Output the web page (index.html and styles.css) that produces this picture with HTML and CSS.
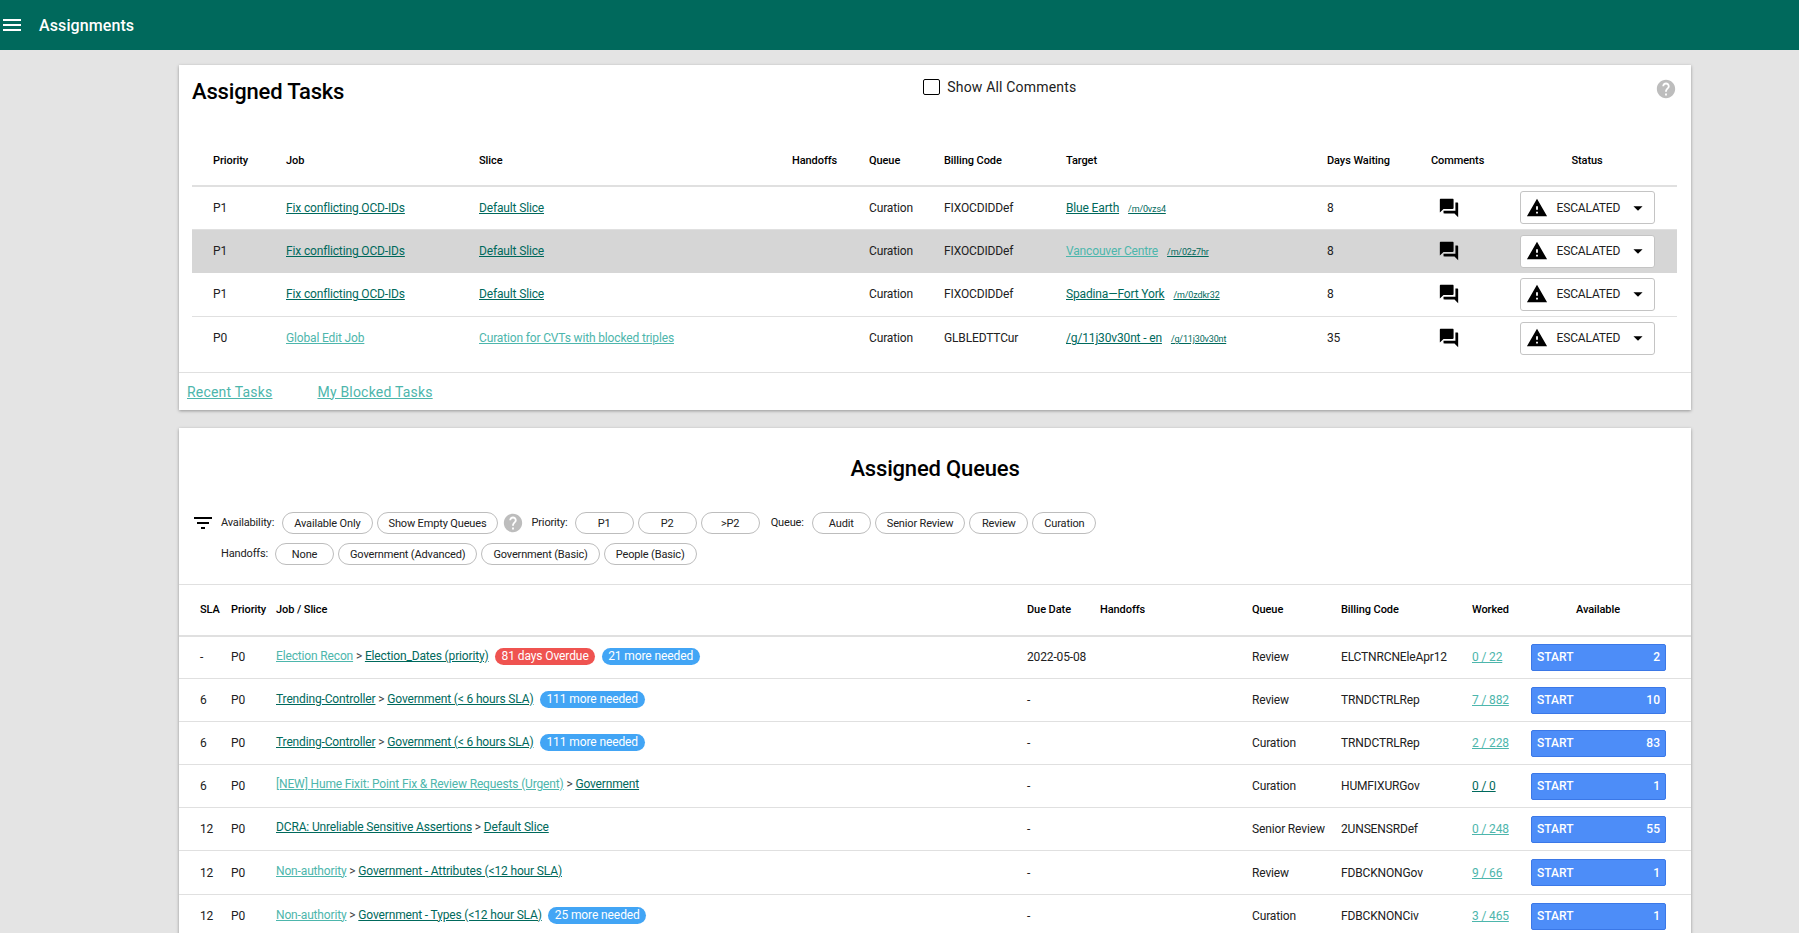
FILE: index.html
```html
<!DOCTYPE html>
<html lang="en">
<head>
<meta charset="utf-8">
<title>Assignments</title>
<link rel="stylesheet" href="styles.css">
</head>
<body>
<svg class="defs" width="0" height="0" aria-hidden="true">
  <symbol id="i-forum" viewBox="0 0 24 24"><path d="M21 6h-2v9H6v2c0 .55.45 1 1 1h11l4 4V7c0-.55-.45-1-1-1zm-4 6V3c0-.55-.45-1-1-1H3c-.55 0-1 .45-1 1v14l4-4h10c.55 0 1-.45 1-1z"/></symbol>
  <symbol id="i-warn" viewBox="0 0 24 24"><path d="M1 21h22L12 2 1 21zm12-3h-2v-2h2v2zm0-4h-2v-4h2v4z"/></symbol>
  <symbol id="i-drop" viewBox="0 0 24 24"><path d="M7 10l5 5 5-5z"/></symbol>
  <symbol id="i-help" viewBox="0 0 24 24"><path d="M12 2C6.48 2 2 6.48 2 12s4.48 10 10 10 10-4.48 10-10S17.52 2 12 2zm1 17h-2v-2h2v2zm2.07-7.75l-.9.92C13.45 12.9 13 13.5 13 15h-2v-.5c0-1.1.45-2.1 1.17-2.83l1.24-1.26c.37-.36.59-.86.59-1.41 0-1.1-.9-2-2-2s-2 .9-2 2H8c0-2.21 1.79-4 4-4s4 1.79 4 4c0 .88-.36 1.68-.93 2.25z"/></symbol>
</svg>

<header class="topbar">
  <svg class="menu-icon" viewBox="0 0 24 24"><path d="M3 18h18v-2H3v2zm0-5h18v-2H3v2zm0-7v2h18V6H3z"/></svg>
  <span class="app-title">Assignments</span>
</header>

<main class="page">
  <section class="card card-tasks">
    <div class="tasks-head">
      <h1 class="title">Assigned Tasks</h1>
      <label class="show-all"><span class="checkbox"></span>Show All Comments</label>
      <svg class="help help-top"><use href="#i-help"/></svg>
    </div>
    <table class="tasks">
      <colgroup>
        <col class="t1"><col class="t2"><col class="t3"><col class="t4"><col class="t5"><col class="t6"><col class="t7"><col class="t8"><col class="t9"><col class="t10">
      </colgroup>
      <thead>
        <tr><th class="first">Priority</th><th>Job</th><th>Slice</th><th>Handoffs</th><th>Queue</th><th>Billing Code</th><th>Target</th><th>Days Waiting</th><th>Comments</th><th class="center">Status</th></tr>
      </thead>
      <tbody>
        <tr>
          <td class="first">P1</td><td><a href="#">Fix conflicting OCD-IDs</a></td><td><a href="#">Default Slice</a></td><td></td><td>Curation</td><td>FIXOCDIDDef</td>
          <td><a href="#">Blue Earth</a><a class="mid" href="#">/m/0vzs4</a></td><td>8</td>
          <td><svg class="forum"><use href="#i-forum"/></svg></td>
          <td class="center"><button class="status"><svg class="warn"><use href="#i-warn"/></svg><span>ESCALATED</span><svg class="drop"><use href="#i-drop"/></svg></button></td>
        </tr>
        <tr class="hl">
          <td class="first">P1</td><td><a href="#">Fix conflicting OCD-IDs</a></td><td><a href="#">Default Slice</a></td><td></td><td>Curation</td><td>FIXOCDIDDef</td>
          <td><a class="seen" href="#">Vancouver Centre</a><a class="mid" href="#">/m/02z7hr</a></td><td>8</td>
          <td><svg class="forum"><use href="#i-forum"/></svg></td>
          <td class="center"><button class="status"><svg class="warn"><use href="#i-warn"/></svg><span>ESCALATED</span><svg class="drop"><use href="#i-drop"/></svg></button></td>
        </tr>
        <tr>
          <td class="first">P1</td><td><a href="#">Fix conflicting OCD-IDs</a></td><td><a href="#">Default Slice</a></td><td></td><td>Curation</td><td>FIXOCDIDDef</td>
          <td><a href="#">Spadina—Fort York</a><a class="mid" href="#">/m/0zdkr32</a></td><td>8</td>
          <td><svg class="forum"><use href="#i-forum"/></svg></td>
          <td class="center"><button class="status"><svg class="warn"><use href="#i-warn"/></svg><span>ESCALATED</span><svg class="drop"><use href="#i-drop"/></svg></button></td>
        </tr>
        <tr class="last">
          <td class="first">P0</td><td><a class="seen" href="#">Global Edit Job</a></td><td><a class="seen" href="#">Curation for CVTs with blocked triples</a></td><td></td><td>Curation</td><td>GLBLEDTTCur</td>
          <td><a href="#">/g/11j30v30nt - en</a><a class="mid" href="#">/g/11j30v30nt</a></td><td>35</td>
          <td><svg class="forum"><use href="#i-forum"/></svg></td>
          <td class="center"><button class="status"><svg class="warn"><use href="#i-warn"/></svg><span>ESCALATED</span><svg class="drop"><use href="#i-drop"/></svg></button></td>
        </tr>
      </tbody>
    </table>
    <div class="task-links">
      <a class="seen" href="#">Recent Tasks</a>
      <a class="seen" href="#">My Blocked Tasks</a>
    </div>
  </section>

  <section class="card card-queues">
    <h2 class="title queues-title">Assigned Queues</h2>
    <div class="filters">
      <div class="filter-row">
        <svg class="filter-icon" viewBox="0 0 24 24"><path d="M10 18h4v-2h-4v2zM3 6v2h18V6H3zm3 7h12v-2H6v2z"/></svg>
        <span class="f-label f-avail">Availability:</span>
        <button class="pill">Available Only</button>
        <button class="pill">Show Empty Queues</button>
        <svg class="help help-filter"><use href="#i-help"/></svg>
        <span class="f-label f-priority">Priority:</span>
        <button class="pill wide">P1</button>
        <button class="pill wide">P2</button>
        <button class="pill wide">&gt;P2</button>
        <span class="f-label f-queue">Queue:</span>
        <button class="pill wide">Audit</button>
        <button class="pill">Senior Review</button>
        <button class="pill wide">Review</button>
        <button class="pill">Curation</button>
      </div>
      <div class="filter-row second">
        <span class="f-label">Handoffs:</span>
        <button class="pill wide">None</button>
        <button class="pill">Government (Advanced)</button>
        <button class="pill">Government (Basic)</button>
        <button class="pill">People (Basic)</button>
      </div>
    </div>
    <table class="queues">
      <colgroup>
        <col class="q1"><col class="q2"><col class="q3"><col class="q4"><col class="q5"><col class="q6"><col class="q7"><col class="q8"><col class="q9">
      </colgroup>
      <thead>
        <tr><th class="first">SLA</th><th>Priority</th><th>Job / Slice</th><th>Due Date</th><th>Handoffs</th><th>Queue</th><th>Billing Code</th><th>Worked</th><th class="avail">Available</th></tr>
      </thead>
      <tbody>
        <tr>
          <td class="first">-</td><td>P0</td>
          <td class="job"><a class="seen" href="#">Election Recon</a> <span class="gt">&gt;</span> <a href="#">Election_Dates (priority)</a><span class="badge red">81 days Overdue</span><span class="badge blue">21 more needed</span></td>
          <td>2022-05-08</td><td></td><td>Review</td><td>ELCTNRCNEleApr12</td><td><a class="seen" href="#">0 / 22</a></td>
          <td><button class="start"><span>START</span><span>2</span></button></td>
        </tr>
        <tr>
          <td class="first">6</td><td>P0</td>
          <td class="job"><a href="#">Trending-Controller</a> <span class="gt">&gt;</span> <a href="#">Government (&lt; 6 hours SLA)</a><span class="badge blue">111 more needed</span></td>
          <td>-</td><td></td><td>Review</td><td>TRNDCTRLRep</td><td><a class="seen" href="#">7 / 882</a></td>
          <td><button class="start"><span>START</span><span>10</span></button></td>
        </tr>
        <tr>
          <td class="first">6</td><td>P0</td>
          <td class="job"><a href="#">Trending-Controller</a> <span class="gt">&gt;</span> <a href="#">Government (&lt; 6 hours SLA)</a><span class="badge blue">111 more needed</span></td>
          <td>-</td><td></td><td>Curation</td><td>TRNDCTRLRep</td><td><a class="seen" href="#">2 / 228</a></td>
          <td><button class="start"><span>START</span><span>83</span></button></td>
        </tr>
        <tr>
          <td class="first">6</td><td>P0</td>
          <td class="job up"><a class="seen" href="#">[NEW] Hume Fixit: Point Fix &amp; Review Requests (Urgent)</a> <span class="gt">&gt;</span> <a href="#">Government</a></td>
          <td>-</td><td></td><td>Curation</td><td>HUMFIXURGov</td><td><a href="#">0 / 0</a></td>
          <td><button class="start"><span>START</span><span>1</span></button></td>
        </tr>
        <tr>
          <td class="first">12</td><td>P0</td>
          <td class="job up"><a href="#">DCRA: Unreliable Sensitive Assertions</a> <span class="gt">&gt;</span> <a href="#">Default Slice</a></td>
          <td>-</td><td></td><td>Senior Review</td><td>2UNSENSRDef</td><td><a class="seen" href="#">0 / 248</a></td>
          <td><button class="start"><span>START</span><span>55</span></button></td>
        </tr>
        <tr class="tall">
          <td class="first">12</td><td>P0</td>
          <td class="job up"><a class="seen" href="#">Non-authority</a> <span class="gt">&gt;</span> <a href="#">Government - Attributes (&lt;12 hour SLA)</a></td>
          <td>-</td><td></td><td>Review</td><td>FDBCKNONGov</td><td><a class="seen" href="#">9 / 66</a></td>
          <td><button class="start"><span>START</span><span>1</span></button></td>
        </tr>
        <tr>
          <td class="first">12</td><td>P0</td>
          <td class="job"><a class="seen" href="#">Non-authority</a> <span class="gt">&gt;</span> <a href="#">Government - Types (&lt;12 hour SLA)</a><span class="badge blue">25 more needed</span></td>
          <td>-</td><td></td><td>Curation</td><td>FDBCKNONCiv</td><td><a class="seen" href="#">3 / 465</a></td>
          <td><button class="start"><span>START</span><span>1</span></button></td>
        </tr>
      </tbody>
    </table>
  </section>
</main>
</body>
</html>
```

FILE: styles.css
```css
* { box-sizing: border-box; }

html, body {
  height: 100%;
  overflow: hidden;
}

body {
  margin: 0;
  background: #e4e4e4;
  color: #000;
  font-family: Roboto, "Liberation Sans", sans-serif;
  font-size: 12px;
}

.defs { position: absolute; }

a { color: #00695c; text-decoration: underline; }
a.seen { color: #4db6ac; }

/* top bar */
.topbar {
  height: 50px;
  background: #00695c;
  display: flex;
  align-items: center;
  color: #fff;
}
.menu-icon { width: 24px; height: 24px; fill: #fff; flex: none; }
.app-title { margin-left: 15px; font-size: 16px; font-weight: 500; letter-spacing: .1px; }

/* page */
.page {
  padding: 15px 108px 0 179px;
  display: flex;
  flex-direction: column;
  gap: 18px;
}
.card {
  background: #fff;
  box-shadow: 0 1px 3px rgba(0, 0, 0, .35);
}
.title { margin: 0; font-size: 22px; font-weight: 500; line-height: 26px; letter-spacing: -.17px; }

/* assigned tasks */
.card-tasks { padding-top: 14px; }
.tasks-head {
  height: 56px;
  padding: 0 14px 0 13px;
  display: flex;
  align-items: flex-start;
}
.show-all {
  margin: -1px 0 0 579px;
  height: 18px;
  display: flex;
  align-items: center;
  gap: 7px;
  font-size: 14px;
  letter-spacing: .18px;
  color: #212121;
}
.checkbox {
  width: 17px;
  height: 16px;
  border: 1.5px solid #000;
  border-radius: 2px;
  flex: none;
}
.help { fill: #bdbdbd; }
.help-top { width: 22px; height: 22px; margin: -1px 0 0 auto; }

table { border-collapse: collapse; table-layout: fixed; }
th { text-align: left; font-size: 11px; font-weight: 500; padding: 0; letter-spacing: -.08px; }
td { padding: 0; color: #212121; vertical-align: middle; letter-spacing: -.15px; }
th.center, td.center { text-align: center; }

.tasks { width: 1485px; margin-left: 13px; }
.t1 { width: 94px; }
.t2 { width: 193px; }
.t3 { width: 313px; }
.t4 { width: 77px; }
.t5 { width: 75px; }
.t6 { width: 122px; }
.t7 { width: 261px; }
.t8 { width: 104px; }
.t9 { width: 66px; }
.t10 { width: 180px; }

.tasks th.first, .tasks td.first { padding-left: 21px; }
.tasks thead tr { height: 51px; border-bottom: 2px solid #e0e0e0; }
.tasks th { padding-top: 1px; }
.tasks tbody tr { height: 43px; border-bottom: 1px solid #e0e0e0; }
.tasks tbody tr.hl { background: #d6d6d6; height: 44px; border-bottom: 0; }
.tasks tbody tr.last { height: 44px; border-bottom: 0; }

.mid { margin-left: 9px; font-size: 9px; }
.forum { width: 22px; height: 22px; margin-left: 7px; display: block; }
.status {
  width: 135px;
  height: 33px;
  padding: 0 0 0 5px;
  display: inline-flex;
  align-items: center;
  background: #fff;
  border: 1px solid #c4c4c4;
  border-radius: 3px;
  font: 12px Roboto, "Liberation Sans", sans-serif;
  letter-spacing: -.15px;
  color: #212121;
  vertical-align: middle;
}
.warn { width: 22px; height: 22px; margin-right: 9px; flex: none; }
.drop { width: 22px; height: 22px; margin-left: 7px; flex: none; }

.task-links {
  margin-top: 12px;
  height: 38px;
  padding-left: 8px;
  border-top: 1px solid #e0e0e0;
  display: flex;
  align-items: center;
  gap: 45px;
  font-size: 14px;
  letter-spacing: .2px;
}

/* assigned queues */
.card-queues { padding-top: 28px; }
.queues-title { text-align: center; }
.filters { margin-top: 30px; }
.filter-row {
  display: flex;
  align-items: center;
  gap: 4px;
  height: 22px;
  padding-left: 12px;
}
.filter-row.second { margin-top: 9px; padding-left: 42px; }
.filter-icon { width: 24px; height: 24px; margin-right: 2px; flex: none; }
.f-label { font-size: 11px; color: #212121; margin-right: 3px; position: relative; top: -1px; letter-spacing: -.15px; }
.f-avail { margin-right: 4px; }
.f-priority { margin-left: 4px; }
.f-queue { margin: 0 4px 0 7px; }
.pill {
  height: 22px;
  padding: 0 11px;
  background: #fff;
  border: 1px solid #bdbdbd;
  border-radius: 11px;
  font: 11px Roboto, "Liberation Sans", sans-serif;
  letter-spacing: -.15px;
  color: #212121;
}
.pill.wide { width: 59px; padding: 0; }
.help-filter { width: 22px; height: 22px; margin: 0 -1px 0 0; flex: none; }

.queues {
  width: 1512px;
  margin-top: 19px;
  border-top: 1px solid #e0e0e0;
}
.q1 { width: 52px; }
.q2 { width: 45px; }
.q3 { width: 751px; }
.q4 { width: 73px; }
.q5 { width: 152px; }
.q6 { width: 89px; }
.q7 { width: 131px; }
.q8 { width: 59px; }
.q9 { width: 160px; }

.queues th.first, .queues td.first { padding-left: 21px; }
.queues th.avail { text-align: center; padding-right: 26px; }
.queues thead tr { height: 51px; border-bottom: 2px solid #e0e0e0; }
.queues tbody tr { height: 43px; border-bottom: 1px solid #e0e0e0; }
.queues tbody tr.tall { height: 44px; }
.job { padding-bottom: 2px; }
.job.up { padding-bottom: 4px; }
.gt { color: #424242; }
.badge {
  display: inline-block;
  margin-left: 6.5px;
  padding: 0 6.5px;
  height: 17px;
  line-height: 17px;
  border-radius: 9px;
  color: #fff;
  letter-spacing: -.1px;
}
.badge.red { background: #ef5350; }
.badge.blue { background: #42a5f5; }
.start {
  width: 135px;
  height: 27px;
  padding: 0 5px;
  display: flex;
  justify-content: space-between;
  align-items: center;
  background: #4d8df8;
  border: 1px solid #3b78e7;
  border-radius: 2px;
  color: #fff;
  font: 500 12px Roboto, "Liberation Sans", sans-serif;
}
```
